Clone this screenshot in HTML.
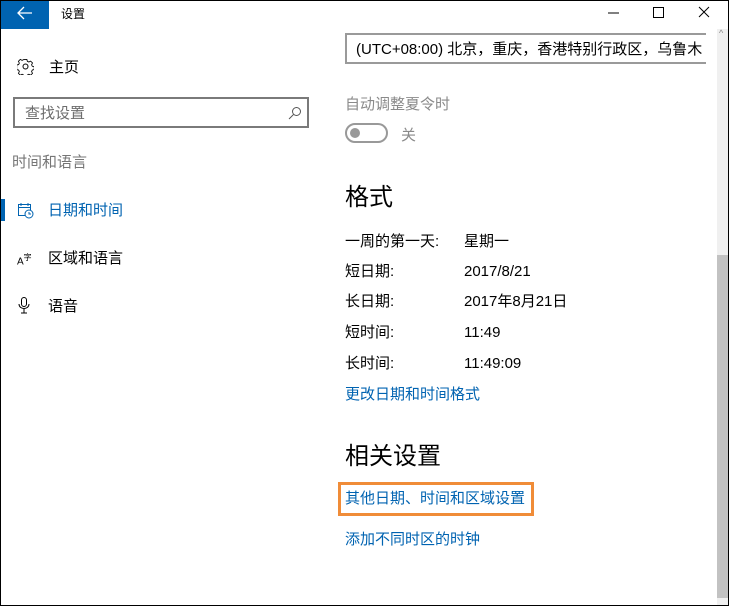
<!DOCTYPE html>
<html><head><meta charset="utf-8"><style>
*{margin:0;padding:0;box-sizing:border-box}
body{width:729px;height:606px;overflow:hidden;background:#fff;font-family:"Liberation Sans","Noto Sans CJK SC",sans-serif;position:relative;color:#000}
.a{position:absolute;white-space:nowrap}
.t{font-size:15px;line-height:20px;margin-top:2px}
.blue{color:#0063b1}
.g{color:#8a8a8a}
</style></head><body>
<div class="a" style="left:0;top:0;width:729px;height:606px;border:1px solid #000;border-top:1px solid #000"></div>
<div class="a" style="left:1px;top:1px;width:48px;height:28px;background:#0063b1"></div>
<svg class="a" style="left:17px;top:6px" width="16" height="14"><path d="M15 7H2M7 1L1 7l6 6" stroke="#fff" stroke-width="1.3" fill="none"/></svg>
<div class="a" style="left:61px;top:5px;font-size:12px;line-height:18px">设置</div>
<svg class="a" style="left:603px;top:5px" width="116" height="16"><path d="M5 8h11" stroke="#000"/><rect x="50.5" y="2.5" width="10" height="10" stroke="#000" fill="none"/><path d="M96 2l10 10M106 2L96 12" stroke="#000"/></svg>
<svg class="a" style="left:17px;top:58px" width="17" height="17" viewBox="0 0 17 17"><circle cx="8.5" cy="8.5" r="2.5" fill="none" stroke="#000"/><path d="M7 1h3l.5 2 1.6.8 1.9-1 2 2-1 1.9.8 1.6 2 .5v3l-2 .5-.8 1.6 1 1.9-2 2-1.9-1-1.6.8-.5 2H7l-.5-2-1.6-.8-1.9 1-2-2 1-1.9-.8-1.6-2-.5V7l2-.5.8-1.6-1-1.9 2-2 1.9 1 1.6-.8z" fill="none" stroke="#000" stroke-width=".9" transform="scale(.94) translate(.5 .5)"/></svg>
<div class="a t" style="left:49px;top:56px">主页</div>
<div class="a" style="left:13px;top:97px;width:296px;height:31px;border:2px solid #7a7a7a"></div>
<div class="a t" style="left:25px;top:102px;color:#6d6d6d">查找设置</div>
<svg class="a" style="left:288px;top:106px" width="14" height="14"><circle cx="8.5" cy="5.5" r="4" fill="none" stroke="#555"/><path d="M5.5 8.5L1 13" stroke="#555"/></svg>
<div class="a t g" style="left:12px;top:151px;color:#767676">时间和语言</div>
<div class="a" style="left:1px;top:199px;width:4px;height:22px;background:#0063b1"></div>
<svg class="a" style="left:17px;top:202px" width="17" height="17"><rect x="1.5" y="2.5" width="12" height="11" fill="none" stroke="#0063b1"/><path d="M1.5 5.5h12M4 1v3M11 1v3" stroke="#0063b1"/><circle cx="12" cy="12" r="4" fill="#fff" stroke="#0063b1"/><path d="M12 10v2h2" stroke="#0063b1" fill="none"/></svg>
<div class="a t blue" style="left:48px;top:199px">日期和时间</div>
<div class="a" style="left:17px;top:252px;font-size:10px;line-height:12px">A<sup style="font-size:8px">字</sup></div>
<div class="a t" style="left:48px;top:247px">区域和语言</div>
<svg class="a" style="left:17px;top:296px" width="14" height="18"><rect x="4.5" y="1.5" width="5" height="9" rx="2.5" fill="none" stroke="#000"/><path d="M2 8c0 6 10 6 10 0M7 13v4M4 17h6" stroke="#000" fill="none"/></svg>
<div class="a t" style="left:48px;top:295px">语音</div>

<div class="a" style="left:345px;top:33px;width:361px;height:31px;border:2px solid #9a9a9a;border-right:none"></div>
<div class="a t" style="left:356px;top:38px">(UTC+08:00) 北京，重庆，香港特别行政区，乌鲁木</div>
<div class="a" style="left:717px;top:29px;width:11px;height:576px;background:#f0f0f0"></div>
<div class="a" style="left:717px;top:255px;width:11px;height:343px;background:#c2c2c2"></div>
<div class="a" style="left:719px;top:28px;font-size:9px;color:#888">^</div>
<div class="a t g" style="left:345px;top:93px">自动调整夏令时</div>
<div class="a" style="left:345px;top:123px;width:43px;height:20px;border:2px solid #999;border-radius:10px"></div>
<div class="a" style="left:350px;top:128px;width:10px;height:10px;border-radius:5px;background:#999"></div>
<div class="a t g" style="left:401px;top:124px">关</div>
<div class="a" style="left:345px;top:182px;font-size:24px;line-height:32px">格式</div>
<div class="a t" style="left:345px;top:230px">一周的第一天:</div><div class="a t" style="left:464px;top:230px">星期一</div>
<div class="a t" style="left:345px;top:260px">短日期:</div><div class="a t" style="left:464px;top:260px">2017/8/21</div>
<div class="a t" style="left:345px;top:290px">长日期:</div><div class="a t" style="left:464px;top:290px">2017年8月21日</div>
<div class="a t" style="left:345px;top:321px">短时间:</div><div class="a t" style="left:464px;top:321px">11:49</div>
<div class="a t" style="left:345px;top:352px">长时间:</div><div class="a t" style="left:464px;top:352px">11:49:09</div>
<div class="a t blue" style="left:345px;top:383px">更改日期和时间格式</div>
<div class="a" style="left:345px;top:441px;font-size:24px;line-height:32px">相关设置</div>
<div class="a" style="left:338px;top:482px;width:196px;height:34px;border:3px solid #f08c38"></div>
<div class="a t blue" style="left:345px;top:487px">其他日期、时间和区域设置</div>
<div class="a t blue" style="left:345px;top:528px">添加不同时区的时钟</div>
</body></html>
